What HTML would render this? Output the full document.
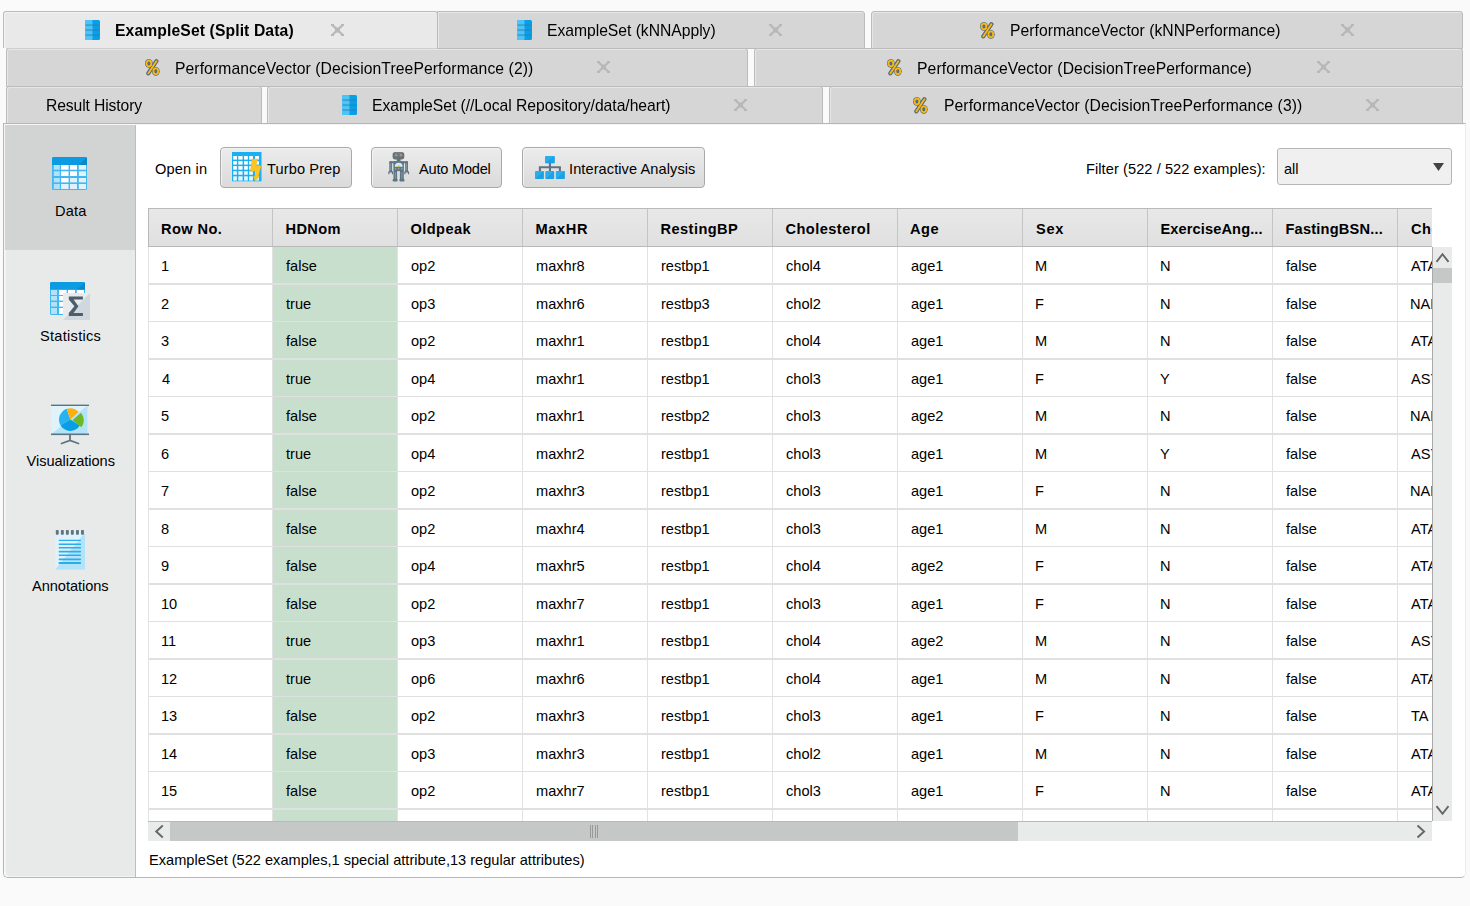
<!DOCTYPE html><html><head><meta charset="utf-8"><style>
*{margin:0;padding:0;box-sizing:border-box}
html,body{width:1470px;height:906px;overflow:hidden;background:#fafafa;font-family:"Liberation Sans",sans-serif;color:#000}
.a{position:absolute}
.tx{position:absolute;white-space:nowrap}
.tab{position:absolute;border:1px solid #bbbbbb;border-radius:3px 3px 0 0;background:#d6d6d6;box-shadow:inset 1px 1px 0 #e6e6e6}
.tab.sel{background:#e9e9e9;border-bottom:none;box-shadow:inset 1px 1px 0 #f3f3f3}
.btn{position:absolute;border:1px solid #a9a9a9;border-radius:4px;background:linear-gradient(#ececec,#dadada);box-shadow:inset 1px 1px 0 #f2f2f2}
</style></head><body>
<div class="tab sel" style="left:3px;top:11px;width:435px;height:37px;z-index:2"></div>
<div class="tab" style="left:437px;top:11px;width:428px;height:38px;z-index:1;border-top-left-radius:0"></div>
<div class="tab" style="left:871px;top:11px;width:592px;height:38px;z-index:1"></div>
<div class="tab" style="left:6px;top:48px;width:742px;height:39px;z-index:3"></div>
<div class="tab" style="left:754px;top:48px;width:709px;height:39px;z-index:3"></div>
<div class="tab" style="left:6px;top:86px;width:256px;height:38px;z-index:4"></div>
<div class="tab" style="left:267px;top:86px;width:556px;height:38px;z-index:4"></div>
<div class="tab" style="left:829px;top:86px;width:634px;height:38px;z-index:4"></div>
<div class="a" style="left:6px;top:48px;width:431px;height:1px;background:#cfcfcf;z-index:5"></div>
<svg class="a" style="left:85px;top:20px;z-index:20" width="15" height="20" viewBox="0 0 15 20"><rect x="0" y="0" width="15" height="20" rx="1.5" fill="#089fe6"/><rect x="0" y="0" width="7.5" height="20" rx="1" fill="#4cc4f8"/><rect x="0.5" y="4.6" width="14" height="0.9" fill="#2e7fae"/><rect x="0.5" y="9.6" width="14" height="0.9" fill="#2e7fae"/><rect x="0.5" y="14.6" width="14" height="0.9" fill="#2e7fae"/></svg>
<svg class="a" style="left:331px;top:24px;z-index:20" width="13" height="12" viewBox="0 0 13 12"><path d="M1.6 1.2L11.4 10.8M11.4 1.2L1.6 10.8" stroke="#b8b8b8" stroke-width="2.3"/><rect x="0" y="0" width="3" height="2" fill="#b8b8b8"/><rect x="10" y="0" width="3" height="2" fill="#b8b8b8"/><rect x="0" y="10" width="3" height="2" fill="#b8b8b8"/><rect x="10" y="10" width="3" height="2" fill="#b8b8b8"/><rect x="4" y="3.5" width="5" height="5" fill="#b8b8b8"/></svg>
<svg class="a" style="left:517px;top:20px;z-index:20" width="15" height="20" viewBox="0 0 15 20"><rect x="0" y="0" width="15" height="20" rx="1.5" fill="#089fe6"/><rect x="0" y="0" width="7.5" height="20" rx="1" fill="#4cc4f8"/><rect x="0.5" y="4.6" width="14" height="0.9" fill="#2e7fae"/><rect x="0.5" y="9.6" width="14" height="0.9" fill="#2e7fae"/><rect x="0.5" y="14.6" width="14" height="0.9" fill="#2e7fae"/></svg>
<svg class="a" style="left:769px;top:24px;z-index:20" width="13" height="12" viewBox="0 0 13 12"><path d="M1.6 1.2L11.4 10.8M11.4 1.2L1.6 10.8" stroke="#b8b8b8" stroke-width="2.3"/><rect x="0" y="0" width="3" height="2" fill="#b8b8b8"/><rect x="10" y="0" width="3" height="2" fill="#b8b8b8"/><rect x="0" y="10" width="3" height="2" fill="#b8b8b8"/><rect x="10" y="10" width="3" height="2" fill="#b8b8b8"/><rect x="4" y="3.5" width="5" height="5" fill="#b8b8b8"/></svg>
<svg class="a" style="left:980px;top:22px;z-index:20" width="16" height="17" viewBox="0 0 16 17"><ellipse cx="3.9" cy="4.4" rx="3.9" ry="4.4" fill="#536c7e"/><ellipse cx="10.8" cy="12.3" rx="3.9" ry="4.4" fill="#536c7e"/><line x1="11.4" y1="2.2" x2="3.3" y2="14.4" stroke="#536c7e" stroke-width="4.2" stroke-linecap="round"/><ellipse cx="3.9" cy="4.4" rx="2.4" ry="2.9" fill="none" stroke="#fbb814" stroke-width="1.8"/><ellipse cx="10.8" cy="12.3" rx="2.4" ry="2.9" fill="none" stroke="#fbb814" stroke-width="1.8"/><line x1="11.4" y1="2.2" x2="3.3" y2="14.4" stroke="#fbb814" stroke-width="1.8" stroke-linecap="round"/></svg>
<svg class="a" style="left:1341px;top:24px;z-index:20" width="13" height="12" viewBox="0 0 13 12"><path d="M1.6 1.2L11.4 10.8M11.4 1.2L1.6 10.8" stroke="#b8b8b8" stroke-width="2.3"/><rect x="0" y="0" width="3" height="2" fill="#b8b8b8"/><rect x="10" y="0" width="3" height="2" fill="#b8b8b8"/><rect x="0" y="10" width="3" height="2" fill="#b8b8b8"/><rect x="10" y="10" width="3" height="2" fill="#b8b8b8"/><rect x="4" y="3.5" width="5" height="5" fill="#b8b8b8"/></svg>
<svg class="a" style="left:145px;top:59px;z-index:20" width="16" height="17" viewBox="0 0 16 17"><ellipse cx="3.9" cy="4.4" rx="3.9" ry="4.4" fill="#536c7e"/><ellipse cx="10.8" cy="12.3" rx="3.9" ry="4.4" fill="#536c7e"/><line x1="11.4" y1="2.2" x2="3.3" y2="14.4" stroke="#536c7e" stroke-width="4.2" stroke-linecap="round"/><ellipse cx="3.9" cy="4.4" rx="2.4" ry="2.9" fill="none" stroke="#fbb814" stroke-width="1.8"/><ellipse cx="10.8" cy="12.3" rx="2.4" ry="2.9" fill="none" stroke="#fbb814" stroke-width="1.8"/><line x1="11.4" y1="2.2" x2="3.3" y2="14.4" stroke="#fbb814" stroke-width="1.8" stroke-linecap="round"/></svg>
<svg class="a" style="left:597px;top:61px;z-index:20" width="13" height="12" viewBox="0 0 13 12"><path d="M1.6 1.2L11.4 10.8M11.4 1.2L1.6 10.8" stroke="#b8b8b8" stroke-width="2.3"/><rect x="0" y="0" width="3" height="2" fill="#b8b8b8"/><rect x="10" y="0" width="3" height="2" fill="#b8b8b8"/><rect x="0" y="10" width="3" height="2" fill="#b8b8b8"/><rect x="10" y="10" width="3" height="2" fill="#b8b8b8"/><rect x="4" y="3.5" width="5" height="5" fill="#b8b8b8"/></svg>
<svg class="a" style="left:887px;top:59px;z-index:20" width="16" height="17" viewBox="0 0 16 17"><ellipse cx="3.9" cy="4.4" rx="3.9" ry="4.4" fill="#536c7e"/><ellipse cx="10.8" cy="12.3" rx="3.9" ry="4.4" fill="#536c7e"/><line x1="11.4" y1="2.2" x2="3.3" y2="14.4" stroke="#536c7e" stroke-width="4.2" stroke-linecap="round"/><ellipse cx="3.9" cy="4.4" rx="2.4" ry="2.9" fill="none" stroke="#fbb814" stroke-width="1.8"/><ellipse cx="10.8" cy="12.3" rx="2.4" ry="2.9" fill="none" stroke="#fbb814" stroke-width="1.8"/><line x1="11.4" y1="2.2" x2="3.3" y2="14.4" stroke="#fbb814" stroke-width="1.8" stroke-linecap="round"/></svg>
<svg class="a" style="left:1317px;top:61px;z-index:20" width="13" height="12" viewBox="0 0 13 12"><path d="M1.6 1.2L11.4 10.8M11.4 1.2L1.6 10.8" stroke="#b8b8b8" stroke-width="2.3"/><rect x="0" y="0" width="3" height="2" fill="#b8b8b8"/><rect x="10" y="0" width="3" height="2" fill="#b8b8b8"/><rect x="0" y="10" width="3" height="2" fill="#b8b8b8"/><rect x="10" y="10" width="3" height="2" fill="#b8b8b8"/><rect x="4" y="3.5" width="5" height="5" fill="#b8b8b8"/></svg>
<svg class="a" style="left:342px;top:95px;z-index:20" width="15" height="20" viewBox="0 0 15 20"><rect x="0" y="0" width="15" height="20" rx="1.5" fill="#089fe6"/><rect x="0" y="0" width="7.5" height="20" rx="1" fill="#4cc4f8"/><rect x="0.5" y="4.6" width="14" height="0.9" fill="#2e7fae"/><rect x="0.5" y="9.6" width="14" height="0.9" fill="#2e7fae"/><rect x="0.5" y="14.6" width="14" height="0.9" fill="#2e7fae"/></svg>
<svg class="a" style="left:734px;top:99px;z-index:20" width="13" height="12" viewBox="0 0 13 12"><path d="M1.6 1.2L11.4 10.8M11.4 1.2L1.6 10.8" stroke="#b8b8b8" stroke-width="2.3"/><rect x="0" y="0" width="3" height="2" fill="#b8b8b8"/><rect x="10" y="0" width="3" height="2" fill="#b8b8b8"/><rect x="0" y="10" width="3" height="2" fill="#b8b8b8"/><rect x="10" y="10" width="3" height="2" fill="#b8b8b8"/><rect x="4" y="3.5" width="5" height="5" fill="#b8b8b8"/></svg>
<svg class="a" style="left:913px;top:97px;z-index:20" width="16" height="17" viewBox="0 0 16 17"><ellipse cx="3.9" cy="4.4" rx="3.9" ry="4.4" fill="#536c7e"/><ellipse cx="10.8" cy="12.3" rx="3.9" ry="4.4" fill="#536c7e"/><line x1="11.4" y1="2.2" x2="3.3" y2="14.4" stroke="#536c7e" stroke-width="4.2" stroke-linecap="round"/><ellipse cx="3.9" cy="4.4" rx="2.4" ry="2.9" fill="none" stroke="#fbb814" stroke-width="1.8"/><ellipse cx="10.8" cy="12.3" rx="2.4" ry="2.9" fill="none" stroke="#fbb814" stroke-width="1.8"/><line x1="11.4" y1="2.2" x2="3.3" y2="14.4" stroke="#fbb814" stroke-width="1.8" stroke-linecap="round"/></svg>
<svg class="a" style="left:1366px;top:99px;z-index:20" width="13" height="12" viewBox="0 0 13 12"><path d="M1.6 1.2L11.4 10.8M11.4 1.2L1.6 10.8" stroke="#b8b8b8" stroke-width="2.3"/><rect x="0" y="0" width="3" height="2" fill="#b8b8b8"/><rect x="10" y="0" width="3" height="2" fill="#b8b8b8"/><rect x="0" y="10" width="3" height="2" fill="#b8b8b8"/><rect x="10" y="10" width="3" height="2" fill="#b8b8b8"/><rect x="4" y="3.5" width="5" height="5" fill="#b8b8b8"/></svg>
<div class="a" style="left:3px;top:123px;width:1463px;height:755px;border:1px solid #b6b6b6;border-right-color:#ececec;border-radius:0 0 5px 5px;background:#fff;z-index:10"></div>
<div class="a" style="left:4px;top:124px;width:1461px;height:1px;background:#f6f6f6;z-index:11"></div>
<div class="a" style="left:4px;top:124px;width:1px;height:748px;background:#f6f6f6;z-index:11"></div>
<div class="a" style="left:5px;top:125px;width:131px;height:752px;background:#e8eaea;border-right:1px solid #bdbdbd;border-bottom-left-radius:4px;box-shadow:inset 1px -1px 0 #f4f4f4;z-index:11"></div>
<div class="a" style="left:5px;top:125px;width:130px;height:125px;background:#d2d4d3;z-index:12"></div>
<div class="btn" style="left:220px;top:147px;width:132px;height:41px;z-index:12"></div>
<div class="btn" style="left:371px;top:147px;width:131px;height:41px;z-index:12"></div>
<div class="btn" style="left:522px;top:147px;width:183px;height:41px;z-index:12"></div>
<div class="a" style="left:1277px;top:148px;width:175px;height:37px;border:1px solid #b5b5b5;border-radius:3px;background:#f0f0f0;z-index:12"></div>
<svg class="a" style="left:1433px;top:163px;z-index:13" width="11" height="8"><path d="M0 0H11L5.5 8Z" fill="#444"/></svg>
<svg class="a" style="left:52px;top:157px;z-index:20" width="35" height="33" viewBox="0 0 35 33"><rect x="0" y="0" width="35" height="33" rx="1.5" fill="#41b8f1"/><path d="M1.5 0H33.5A1.5 1.5 0 0 1 35 1.5V8H0V1.5A1.5 1.5 0 0 1 1.5 0Z" fill="#0a9be3"/><path d="M27 8L35 0.5V8Z" fill="#0787cc"/><rect x="1.8" y="8" width="6" height="4.7" fill="#b3e2f8"/><rect x="9" y="8" width="7.6" height="4.7" fill="#ffffff"/><rect x="18" y="8" width="7" height="4.7" fill="#ffffff"/><rect x="26.8" y="8" width="7.2" height="4.7" fill="#e0f3fc"/><rect x="1.8" y="14.3" width="6" height="4.7" fill="#b3e2f8"/><rect x="9" y="14.3" width="7.6" height="4.7" fill="#ffffff"/><rect x="18" y="14.3" width="7" height="4.7" fill="#ffffff"/><rect x="26.8" y="14.3" width="7.2" height="4.7" fill="#e0f3fc"/><rect x="1.8" y="21" width="6" height="4.4" fill="#b3e2f8"/><rect x="9" y="21" width="7.6" height="4.4" fill="#ffffff"/><rect x="18" y="21" width="7" height="4.4" fill="#e0f3fc"/><rect x="26.8" y="21" width="7.2" height="4.4" fill="#e0f3fc"/><rect x="1.8" y="27" width="6" height="5" fill="#b3e2f8"/><rect x="9" y="27" width="7.6" height="5" fill="#e0f3fc"/><rect x="18" y="27" width="7" height="5" fill="#e0f3fc"/><rect x="26.8" y="27" width="7.2" height="5" fill="#e0f3fc"/></svg>
<svg class="a" style="left:50px;top:282px;z-index:20" width="41" height="39" viewBox="0 0 41 39"><rect x="0" y="0" width="35" height="33" rx="1.5" fill="#41b8f1"/><path d="M1.5 0H33.5A1.5 1.5 0 0 1 35 1.5V7.5H0V1.5A1.5 1.5 0 0 1 1.5 0Z" fill="#0a9be3"/><path d="M27 7.5L35 0.5V7.5Z" fill="#0787cc"/><rect x="1" y="8" width="6" height="5" fill="#b3e2f8"/><rect x="9" y="8" width="7.6" height="5" fill="#ffffff"/><rect x="18" y="8" width="7" height="5" fill="#ffffff"/><rect x="26.8" y="8" width="7.2" height="5" fill="#ffffff"/><rect x="1" y="14" width="6" height="4.6" fill="#b3e2f8"/><rect x="9" y="14" width="7.6" height="4.6" fill="#ffffff"/><rect x="18" y="14" width="7" height="4.6" fill="#ffffff"/><rect x="26.8" y="14" width="7.2" height="4.6" fill="#ffffff"/><rect x="1" y="20" width="6" height="4.6" fill="#b3e2f8"/><rect x="9" y="20" width="7.6" height="4.6" fill="#ffffff"/><rect x="18" y="20" width="7" height="4.6" fill="#ffffff"/><rect x="26.8" y="20" width="7.2" height="4.6" fill="#ffffff"/><rect x="1" y="26" width="6" height="6" fill="#b3e2f8"/><rect x="9" y="26" width="7.6" height="6" fill="#ffffff"/><rect x="18" y="26" width="7" height="6" fill="#ffffff"/><rect x="26.8" y="26" width="7.2" height="6" fill="#ffffff"/><rect x="13" y="11" width="27" height="27" fill="#e9eaeb"/><path d="M40 11V38H13Z" fill="#d0d8dd"/><path d="M18.8 14.5H32.9V17.5H23.6L28.4 24.2L23.6 30.9H32.9V33.9H18.8V31L24.4 24.2L18.8 17.4Z" fill="#4a5f6b"/></svg>
<svg class="a" style="left:46px;top:400px;z-index:20" width="48" height="46" viewBox="0 0 48 46"><rect x="5.5" y="5.5" width="36" height="28.5" fill="#dff3fc"/><path d="M41.5 5.5V34H5.5Z" fill="#b3e3f8"/><rect x="5" y="4.6" width="38" height="1.4" fill="#5b7482"/><rect x="5" y="33.5" width="38" height="1.6" fill="#5b7482"/><path d="M24 35V40.5M15.5 43.5L24 40.5L32.5 43.5" stroke="#5b7482" stroke-width="1.8" fill="none" stroke-linecap="round"/><path d="M24.3 19.6L14.51 25.25A11.3 11.3 0 0 1 20.81 8.85Z" fill="#29b2f0"/><path d="M24.3 19.6L33.88 25.59A11.3 11.3 0 0 1 14.51 25.25Z" fill="#079ee5"/><path d="M24.3 19.6L20.81 8.85A11.3 11.3 0 0 1 32.70 12.04Z" fill="#fdb00d"/><path d="M26.5 20.200000000000003L34.90 12.64A11.3 11.3 0 0 1 35.40 27.16Z" fill="#6cb825"/></svg>
<svg class="a" style="left:50px;top:526px;z-index:20" width="40" height="48" viewBox="0 0 40 48"><rect x="5" y="6.4" width="30" height="37.3" fill="#dff2fc"/><path d="M35 6.4V43.7H5Z" fill="#b3e3f8"/><rect x="5.8" y="4" width="2.9" height="4.7" rx="0.8" fill="#5e7580"/><rect x="10.9" y="4" width="2.9" height="4.7" rx="0.8" fill="#5e7580"/><rect x="15.9" y="4" width="2.9" height="4.7" rx="0.8" fill="#5e7580"/><rect x="20.9" y="4" width="2.9" height="4.7" rx="0.8" fill="#5e7580"/><rect x="26" y="4" width="2.9" height="4.7" rx="0.8" fill="#5e7580"/><rect x="31" y="4" width="2.9" height="4.7" rx="0.8" fill="#5e7580"/><rect x="8.7" y="13.7" width="22.3" height="1.3" rx="0.6" fill="#28aeed"/><rect x="8.7" y="17.6" width="22.3" height="1.4" rx="0.6" fill="#28aeed"/><rect x="8.7" y="21" width="22.3" height="1.6" rx="0.6" fill="#28aeed"/><rect x="8.7" y="24.8" width="22.3" height="1.6" rx="0.6" fill="#28aeed"/><rect x="8.7" y="28.5" width="22.3" height="1.6" rx="0.6" fill="#28aeed"/><rect x="8.7" y="32.4" width="22.3" height="1.8" rx="0.6" fill="#28aeed"/><rect x="8.7" y="36" width="22.3" height="2" rx="0.6" fill="#28aeed"/></svg>
<svg class="a" style="left:230px;top:150px;z-index:20" width="34" height="34" viewBox="0 0 34 34"><rect x="2" y="2" width="29.5" height="29.3" fill="#1aaef2"/><rect x="3.2" y="6" width="3.7" height="3.6" fill="#ffffff"/><rect x="8.3" y="6" width="4.3" height="3.6" fill="#ffffff"/><rect x="14.1" y="6" width="3.7" height="3.6" fill="#ffffff"/><rect x="19.1" y="6" width="3.8" height="3.6" fill="#ffffff"/><rect x="25" y="6" width="3.9" height="3.6" fill="#ffffff"/><rect x="3.2" y="11.1" width="3.7" height="3.5" fill="#ffffff"/><rect x="8.3" y="11.1" width="4.3" height="3.5" fill="#ffffff"/><rect x="14.1" y="11.1" width="3.7" height="3.5" fill="#ffffff"/><rect x="19.1" y="11.1" width="3.8" height="3.5" fill="#ffffff"/><rect x="25" y="11.1" width="3.9" height="3.5" fill="#ffffff"/><rect x="3.2" y="16.1" width="3.7" height="3.6" fill="#ffffff"/><rect x="8.3" y="16.1" width="4.3" height="3.6" fill="#ffffff"/><rect x="14.1" y="16.1" width="3.7" height="3.6" fill="#ffffff"/><rect x="19.1" y="16.1" width="3.8" height="3.6" fill="#ffffff"/><rect x="25" y="16.1" width="3.9" height="3.6" fill="#ffffff"/><rect x="3.2" y="21.2" width="3.7" height="3.6" fill="#e3f5fd"/><rect x="8.3" y="21.2" width="4.3" height="3.6" fill="#e3f5fd"/><rect x="14.1" y="21.2" width="3.7" height="3.6" fill="#e3f5fd"/><rect x="19.1" y="21.2" width="3.8" height="3.6" fill="#e3f5fd"/><rect x="25" y="21.2" width="3.9" height="3.6" fill="#e3f5fd"/><rect x="3.2" y="26.3" width="3.7" height="4.3" fill="#e3f5fd"/><rect x="8.3" y="26.3" width="4.3" height="4.3" fill="#e3f5fd"/><rect x="14.1" y="26.3" width="3.7" height="4.3" fill="#e3f5fd"/><rect x="19.1" y="26.3" width="3.8" height="4.3" fill="#e3f5fd"/><rect x="25" y="26.3" width="3.9" height="4.3" fill="#e3f5fd"/><path d="M22.1 9H28L25.9 15.2L31.1 15.8L28.3 26.3H29.6L25.1 31.1L23.3 26.3H24.8L26 21.2H20.3Z" fill="#fcc520" stroke="#f0b010" stroke-width="0.4"/></svg>
<svg class="a" style="left:384px;top:150px;z-index:20" width="30" height="34" viewBox="0 0 30 34"><rect x="8.6" y="2.1" width="11.7" height="7.3" rx="2.6" fill="#5d7582"/><rect x="10.5" y="2.4" width="8" height="1" rx="0.5" fill="#8a9da8" opacity="0.6"/><circle cx="12.2" cy="5.2" r="1.25" fill="#e5854c"/><circle cx="16.8" cy="5.2" r="1.25" fill="#e5854c"/><rect x="12.7" y="9" width="3.8" height="2.5" fill="#5d7582"/><rect x="5.3" y="11.3" width="18.7" height="2" rx="0.9" fill="#5d7582"/><rect x="9.4" y="11.3" width="10.5" height="9.8" fill="#5d7582"/><rect x="5.3" y="11.5" width="2.8" height="10.2" fill="#5d7582"/><rect x="21.2" y="11.5" width="2.8" height="10.2" fill="#5d7582"/><rect x="6.3" y="13.5" width="0.9" height="7" fill="#8a9da8"/><rect x="22.2" y="13.5" width="0.9" height="7" fill="#8a9da8"/><path d="M4.3 24.2V22.2Q4.3 21 5.5 21H7.9Q9.1 21 9.1 22.2V24.2H7.9V22.6H5.5V24.2Z" fill="#5d7582"/><path d="M20.3 24.2V22.2Q20.3 21 21.5 21H23.9Q25.1 21 25.1 22.2V24.2H23.9V22.6H21.5V24.2Z" fill="#5d7582"/><path d="M10.7 16.8A4 4 0 0 1 18.7 16.8Z" fill="#cdeefa"/><circle cx="14.7" cy="16.2" r="0.9" fill="#f0b020"/><rect x="10.8" y="17.8" width="1.6" height="1.8" fill="#8a9da8"/><rect x="13.9" y="17.8" width="1.6" height="1.8" fill="#8a9da8"/><rect x="17" y="17.8" width="1.6" height="1.8" fill="#8a9da8"/><rect x="9.5" y="21" width="3.6" height="9" fill="#5d7582"/><rect x="15.9" y="21" width="3.9" height="9" fill="#5d7582"/><rect x="10.9" y="22" width="0.9" height="6.5" fill="#8a9da8"/><rect x="17.4" y="22" width="0.9" height="6.5" fill="#8a9da8"/><rect x="8.6" y="29" width="5" height="2.6" rx="1" fill="#5d7582"/><rect x="15.4" y="29" width="5.1" height="2.6" rx="1" fill="#5d7582"/></svg>
<svg class="a" style="left:532px;top:150px;z-index:20" width="36" height="34" viewBox="0 0 36 34"><rect x="13" y="6" width="9.7" height="7.3" rx="1" fill="#28aeed"/><path d="M17.95 13V21M7.9 21V17.3H27.9V21" stroke="#5d7582" stroke-width="2.1" fill="none"/><rect x="3" y="21" width="8.8" height="7.9" rx="1" fill="#28aeed"/><rect x="13.3" y="21" width="8.8" height="7.9" rx="1" fill="#28aeed"/><rect x="23.8" y="21" width="9" height="7.9" rx="1" fill="#28aeed"/><path d="M22.7 6V13.3H13Z" fill="#1598de" opacity="0.6"/><path d="M11.8 21V28.9H3Z" fill="#1598de" opacity="0.6"/><path d="M22.1 21V28.9H13.3Z" fill="#1598de" opacity="0.6"/><path d="M32.8 21V28.9H23.8Z" fill="#1598de" opacity="0.6"/></svg>
<div class="a" style="left:148px;top:208px;width:1284px;height:39px;border:1px solid #b9b9b9;border-right:none;background:linear-gradient(#e8e8e8,#e0e0e0);z-index:12"></div>
<div class="a" style="left:272px;top:209px;width:1px;height:37px;background:#c4c4c4;z-index:13"></div>
<div class="a" style="left:397px;top:209px;width:1px;height:37px;background:#c4c4c4;z-index:13"></div>
<div class="a" style="left:522px;top:209px;width:1px;height:37px;background:#c4c4c4;z-index:13"></div>
<div class="a" style="left:647px;top:209px;width:1px;height:37px;background:#c4c4c4;z-index:13"></div>
<div class="a" style="left:772px;top:209px;width:1px;height:37px;background:#c4c4c4;z-index:13"></div>
<div class="a" style="left:897px;top:209px;width:1px;height:37px;background:#c4c4c4;z-index:13"></div>
<div class="a" style="left:1022px;top:209px;width:1px;height:37px;background:#c4c4c4;z-index:13"></div>
<div class="a" style="left:1147px;top:209px;width:1px;height:37px;background:#c4c4c4;z-index:13"></div>
<div class="a" style="left:1272px;top:209px;width:1px;height:37px;background:#c4c4c4;z-index:13"></div>
<div class="a" style="left:1397px;top:209px;width:1px;height:37px;background:#c4c4c4;z-index:13"></div>
<div class="a" style="left:273px;top:247px;width:124px;height:574px;background:#c8dfcd;z-index:12"></div>
<div class="a" style="left:148px;top:247px;width:1px;height:574px;background:#e2e2e2;z-index:13"></div>
<div class="a" style="left:272px;top:247px;width:1px;height:574px;background:#e2e2e2;z-index:13"></div>
<div class="a" style="left:397px;top:247px;width:1px;height:574px;background:#e2e2e2;z-index:13"></div>
<div class="a" style="left:522px;top:247px;width:1px;height:574px;background:#e2e2e2;z-index:13"></div>
<div class="a" style="left:647px;top:247px;width:1px;height:574px;background:#e2e2e2;z-index:13"></div>
<div class="a" style="left:772px;top:247px;width:1px;height:574px;background:#e2e2e2;z-index:13"></div>
<div class="a" style="left:897px;top:247px;width:1px;height:574px;background:#e2e2e2;z-index:13"></div>
<div class="a" style="left:1022px;top:247px;width:1px;height:574px;background:#e2e2e2;z-index:13"></div>
<div class="a" style="left:1147px;top:247px;width:1px;height:574px;background:#e2e2e2;z-index:13"></div>
<div class="a" style="left:1272px;top:247px;width:1px;height:574px;background:#e2e2e2;z-index:13"></div>
<div class="a" style="left:1397px;top:247px;width:1px;height:574px;background:#e2e2e2;z-index:13"></div>
<div class="a" style="left:149px;top:283.0px;width:1283px;height:1.5px;background:#e0e0e0;z-index:13"></div>
<div class="a" style="left:149px;top:320.5px;width:1283px;height:1.5px;background:#e0e0e0;z-index:13"></div>
<div class="a" style="left:149px;top:358.0px;width:1283px;height:1.5px;background:#e0e0e0;z-index:13"></div>
<div class="a" style="left:149px;top:395.5px;width:1283px;height:1.5px;background:#e0e0e0;z-index:13"></div>
<div class="a" style="left:149px;top:433.0px;width:1283px;height:1.5px;background:#e0e0e0;z-index:13"></div>
<div class="a" style="left:149px;top:470.5px;width:1283px;height:1.5px;background:#e0e0e0;z-index:13"></div>
<div class="a" style="left:149px;top:508.0px;width:1283px;height:1.5px;background:#e0e0e0;z-index:13"></div>
<div class="a" style="left:149px;top:545.5px;width:1283px;height:1.5px;background:#e0e0e0;z-index:13"></div>
<div class="a" style="left:149px;top:583.0px;width:1283px;height:1.5px;background:#e0e0e0;z-index:13"></div>
<div class="a" style="left:149px;top:620.5px;width:1283px;height:1.5px;background:#e0e0e0;z-index:13"></div>
<div class="a" style="left:149px;top:658.0px;width:1283px;height:1.5px;background:#e0e0e0;z-index:13"></div>
<div class="a" style="left:149px;top:695.5px;width:1283px;height:1.5px;background:#e0e0e0;z-index:13"></div>
<div class="a" style="left:149px;top:733.0px;width:1283px;height:1.5px;background:#e0e0e0;z-index:13"></div>
<div class="a" style="left:149px;top:770.5px;width:1283px;height:1.5px;background:#e0e0e0;z-index:13"></div>
<div class="a" style="left:149px;top:808.0px;width:1283px;height:1.5px;background:#e0e0e0;z-index:13"></div>
<div class="a" style="left:148px;top:821px;width:1284px;height:1px;background:#b9b9b9;z-index:30"></div>
<div class="a" style="left:1432px;top:208px;width:33px;height:613px;background:#fff;z-index:29"></div>
<div class="a" style="left:1432px;top:247px;width:1px;height:574px;background:#a9a9a9;z-index:30"></div>
<div class="a" style="left:1433px;top:247px;width:19px;height:574px;background:#e9eaea;z-index:30"></div>
<div class="a" style="left:1433px;top:268px;width:19px;height:15px;background:#c6c7c7;z-index:31"></div>
<svg class="a" style="left:1433px;top:247px;z-index:31" width="19" height="21"><path d="M3.5 14.8 L9.5 7.2 L15.5 14.8" stroke="#666" stroke-width="1.9" fill="none"/></svg>
<svg class="a" style="left:1433px;top:800px;z-index:31" width="19" height="21"><path d="M3.5 6.2 L9.5 13.8 L15.5 6.2" stroke="#666" stroke-width="1.9" fill="none"/></svg>
<div class="a" style="left:148px;top:822px;width:1284px;height:19px;background:#e9eaea;z-index:30"></div>
<div class="a" style="left:170px;top:822px;width:848px;height:19px;background:#c6c7c7;z-index:31"></div>
<svg class="a" style="left:148px;top:822px;z-index:31" width="21" height="19"><path d="M14.8 3.5 L8.2 9.5 L14.8 15.5" stroke="#666" stroke-width="1.9" fill="none"/></svg>
<svg class="a" style="left:1411px;top:822px;z-index:31" width="21" height="19"><path d="M6.5 3.5 L13.1 9.5 L6.5 15.5" stroke="#666" stroke-width="1.9" fill="none"/></svg>
<svg class="a" style="left:589px;top:825px;z-index:32" width="10" height="13"><path d="M1.5 0V13M3.5 0V13M6.5 0V13M8.5 0V13" stroke="#999" stroke-width="1"/></svg>
<div class="tx" style="left:115px;top:23px;font-size:15.7px;line-height:15.7px;font-weight:bold;letter-spacing:0.114px;z-index:20;will-change:transform;">ExampleSet (Split Data)</div>
<div class="tx" style="left:547px;top:23px;font-size:15.7px;line-height:15.7px;letter-spacing:-0.025px;z-index:20;will-change:transform;">ExampleSet (kNNApply)</div>
<div class="tx" style="left:1010px;top:23px;font-size:15.7px;line-height:15.7px;letter-spacing:0.030px;z-index:20;will-change:transform;">PerformanceVector (kNNPerformance)</div>
<div class="tx" style="left:175px;top:61px;font-size:15.7px;line-height:15.7px;letter-spacing:0.087px;z-index:20;will-change:transform;">PerformanceVector (DecisionTreePerformance (2))</div>
<div class="tx" style="left:917px;top:61px;font-size:15.7px;line-height:15.7px;letter-spacing:0.095px;z-index:20;will-change:transform;">PerformanceVector (DecisionTreePerformance)</div>
<div class="tx" style="left:46px;top:98px;font-size:15.7px;line-height:15.7px;letter-spacing:-0.115px;z-index:20;will-change:transform;">Result History</div>
<div class="tx" style="left:372px;top:98px;font-size:15.7px;line-height:15.7px;letter-spacing:-0.037px;z-index:20;will-change:transform;">ExampleSet (//Local Repository/data/heart)</div>
<div class="tx" style="left:944px;top:98px;font-size:15.7px;line-height:15.7px;letter-spacing:0.087px;z-index:20;will-change:transform;">PerformanceVector (DecisionTreePerformance (3))</div>
<div class="tx" style="left:155px;top:162px;font-size:14.6px;line-height:14.6px;letter-spacing:0.167px;z-index:20;">Open in</div>
<div class="tx" style="left:267px;top:162px;font-size:14.6px;line-height:14.6px;letter-spacing:0.111px;z-index:20;">Turbo Prep</div>
<div class="tx" style="left:419px;top:162px;font-size:14.6px;line-height:14.6px;letter-spacing:-0.222px;z-index:20;">Auto Model</div>
<div class="tx" style="left:569px;top:162px;font-size:14.6px;line-height:14.6px;letter-spacing:0.079px;z-index:20;">Interactive Analysis</div>
<div class="tx" style="left:1086px;top:162px;font-size:14.6px;line-height:14.6px;letter-spacing:0.074px;z-index:20;">Filter (522 / 522 examples):</div>
<div class="tx" style="left:1284px;top:162px;font-size:14.6px;line-height:14.6px;z-index:20;">all</div>
<div class="tx" style="left:55px;top:204px;font-size:14.6px;line-height:14.6px;letter-spacing:0.167px;z-index:20;">Data</div>
<div class="tx" style="left:40px;top:329px;font-size:14.6px;line-height:14.6px;letter-spacing:0.278px;z-index:20;">Statistics</div>
<div class="tx" style="left:26.5px;top:454px;font-size:14.6px;line-height:14.6px;letter-spacing:-0.038px;z-index:20;">Visualizations</div>
<div class="tx" style="left:32px;top:579px;font-size:14.6px;line-height:14.6px;letter-spacing:-0.050px;z-index:20;">Annotations</div>
<div class="tx" style="left:149px;top:853px;font-size:14.6px;line-height:14.6px;letter-spacing:0.000px;z-index:20;">ExampleSet (522 examples,1 special attribute,13 regular attributes)</div>
<div class="tx" style="left:161px;top:222px;font-size:14.6px;line-height:14.6px;font-weight:bold;letter-spacing:0.417px;z-index:20;">Row No.</div>
<div class="tx" style="left:285.5px;top:222px;font-size:14.6px;line-height:14.6px;font-weight:bold;letter-spacing:0.375px;z-index:20;">HDNom</div>
<div class="tx" style="left:410.5px;top:222px;font-size:14.6px;line-height:14.6px;font-weight:bold;letter-spacing:0.417px;z-index:20;">Oldpeak</div>
<div class="tx" style="left:535.5px;top:222px;font-size:14.6px;line-height:14.6px;font-weight:bold;letter-spacing:0.625px;z-index:20;">MaxHR</div>
<div class="tx" style="left:660.5px;top:222px;font-size:14.6px;line-height:14.6px;font-weight:bold;letter-spacing:0.438px;z-index:20;">RestingBP</div>
<div class="tx" style="left:785.5px;top:222px;font-size:14.6px;line-height:14.6px;font-weight:bold;letter-spacing:0.450px;z-index:20;">Cholesterol</div>
<div class="tx" style="left:910px;top:222px;font-size:14.6px;line-height:14.6px;font-weight:bold;letter-spacing:0.500px;z-index:20;">Age</div>
<div class="tx" style="left:1036px;top:222px;font-size:14.6px;line-height:14.6px;font-weight:bold;letter-spacing:0.750px;z-index:20;">Sex</div>
<div class="tx" style="left:1160.5px;top:222px;font-size:14.6px;line-height:14.6px;font-weight:bold;letter-spacing:0.115px;z-index:20;">ExerciseAng...</div>
<div class="tx" style="left:1285.5px;top:222px;font-size:14.6px;line-height:14.6px;font-weight:bold;letter-spacing:0.208px;z-index:20;">FastingBSN...</div>
<div class="tx" style="left:1411px;top:222px;font-size:14.6px;line-height:14.6px;font-weight:bold;z-index:20;letter-spacing:0.5px;">Ches</div>
<div class="tx" style="left:161px;top:259px;font-size:14.6px;line-height:14.6px;z-index:20;">1</div>
<div class="tx" style="left:286px;top:259px;font-size:14.6px;line-height:14.6px;z-index:20;">false</div>
<div class="tx" style="left:411px;top:259px;font-size:14.6px;line-height:14.6px;z-index:20;">op2</div>
<div class="tx" style="left:536px;top:259px;font-size:14.6px;line-height:14.6px;z-index:20;">maxhr8</div>
<div class="tx" style="left:661px;top:259px;font-size:14.6px;line-height:14.6px;z-index:20;">restbp1</div>
<div class="tx" style="left:786px;top:259px;font-size:14.6px;line-height:14.6px;z-index:20;">chol4</div>
<div class="tx" style="left:911px;top:259px;font-size:14.6px;line-height:14.6px;z-index:20;">age1</div>
<div class="tx" style="left:1035px;top:259px;font-size:14.6px;line-height:14.6px;z-index:20;">M</div>
<div class="tx" style="left:1160px;top:259px;font-size:14.6px;line-height:14.6px;z-index:20;">N</div>
<div class="tx" style="left:1286px;top:259px;font-size:14.6px;line-height:14.6px;z-index:20;">false</div>
<div class="tx" style="left:1411px;top:259px;font-size:14.6px;line-height:14.6px;z-index:20;">ATA</div>
<div class="tx" style="left:161px;top:297px;font-size:14.6px;line-height:14.6px;z-index:20;">2</div>
<div class="tx" style="left:286px;top:297px;font-size:14.6px;line-height:14.6px;z-index:20;">true</div>
<div class="tx" style="left:411px;top:297px;font-size:14.6px;line-height:14.6px;z-index:20;">op3</div>
<div class="tx" style="left:536px;top:297px;font-size:14.6px;line-height:14.6px;z-index:20;">maxhr6</div>
<div class="tx" style="left:661px;top:297px;font-size:14.6px;line-height:14.6px;z-index:20;">restbp3</div>
<div class="tx" style="left:786px;top:297px;font-size:14.6px;line-height:14.6px;z-index:20;">chol2</div>
<div class="tx" style="left:911px;top:297px;font-size:14.6px;line-height:14.6px;z-index:20;">age1</div>
<div class="tx" style="left:1035px;top:297px;font-size:14.6px;line-height:14.6px;z-index:20;">F</div>
<div class="tx" style="left:1160px;top:297px;font-size:14.6px;line-height:14.6px;z-index:20;">N</div>
<div class="tx" style="left:1286px;top:297px;font-size:14.6px;line-height:14.6px;z-index:20;">false</div>
<div class="tx" style="left:1410px;top:297px;font-size:14.6px;line-height:14.6px;z-index:20;">NAP</div>
<div class="tx" style="left:161px;top:334px;font-size:14.6px;line-height:14.6px;z-index:20;">3</div>
<div class="tx" style="left:286px;top:334px;font-size:14.6px;line-height:14.6px;z-index:20;">false</div>
<div class="tx" style="left:411px;top:334px;font-size:14.6px;line-height:14.6px;z-index:20;">op2</div>
<div class="tx" style="left:536px;top:334px;font-size:14.6px;line-height:14.6px;z-index:20;">maxhr1</div>
<div class="tx" style="left:661px;top:334px;font-size:14.6px;line-height:14.6px;z-index:20;">restbp1</div>
<div class="tx" style="left:786px;top:334px;font-size:14.6px;line-height:14.6px;z-index:20;">chol4</div>
<div class="tx" style="left:911px;top:334px;font-size:14.6px;line-height:14.6px;z-index:20;">age1</div>
<div class="tx" style="left:1035px;top:334px;font-size:14.6px;line-height:14.6px;z-index:20;">M</div>
<div class="tx" style="left:1160px;top:334px;font-size:14.6px;line-height:14.6px;z-index:20;">N</div>
<div class="tx" style="left:1286px;top:334px;font-size:14.6px;line-height:14.6px;z-index:20;">false</div>
<div class="tx" style="left:1411px;top:334px;font-size:14.6px;line-height:14.6px;z-index:20;">ATA</div>
<div class="tx" style="left:162px;top:372px;font-size:14.6px;line-height:14.6px;z-index:20;">4</div>
<div class="tx" style="left:286px;top:372px;font-size:14.6px;line-height:14.6px;z-index:20;">true</div>
<div class="tx" style="left:411px;top:372px;font-size:14.6px;line-height:14.6px;z-index:20;">op4</div>
<div class="tx" style="left:536px;top:372px;font-size:14.6px;line-height:14.6px;z-index:20;">maxhr1</div>
<div class="tx" style="left:661px;top:372px;font-size:14.6px;line-height:14.6px;z-index:20;">restbp1</div>
<div class="tx" style="left:786px;top:372px;font-size:14.6px;line-height:14.6px;z-index:20;">chol3</div>
<div class="tx" style="left:911px;top:372px;font-size:14.6px;line-height:14.6px;z-index:20;">age1</div>
<div class="tx" style="left:1035px;top:372px;font-size:14.6px;line-height:14.6px;z-index:20;">F</div>
<div class="tx" style="left:1160px;top:372px;font-size:14.6px;line-height:14.6px;z-index:20;">Y</div>
<div class="tx" style="left:1286px;top:372px;font-size:14.6px;line-height:14.6px;z-index:20;">false</div>
<div class="tx" style="left:1411px;top:372px;font-size:14.6px;line-height:14.6px;z-index:20;">ASY</div>
<div class="tx" style="left:161px;top:409px;font-size:14.6px;line-height:14.6px;z-index:20;">5</div>
<div class="tx" style="left:286px;top:409px;font-size:14.6px;line-height:14.6px;z-index:20;">false</div>
<div class="tx" style="left:411px;top:409px;font-size:14.6px;line-height:14.6px;z-index:20;">op2</div>
<div class="tx" style="left:536px;top:409px;font-size:14.6px;line-height:14.6px;z-index:20;">maxhr1</div>
<div class="tx" style="left:661px;top:409px;font-size:14.6px;line-height:14.6px;z-index:20;">restbp2</div>
<div class="tx" style="left:786px;top:409px;font-size:14.6px;line-height:14.6px;z-index:20;">chol3</div>
<div class="tx" style="left:911px;top:409px;font-size:14.6px;line-height:14.6px;z-index:20;">age2</div>
<div class="tx" style="left:1035px;top:409px;font-size:14.6px;line-height:14.6px;z-index:20;">M</div>
<div class="tx" style="left:1160px;top:409px;font-size:14.6px;line-height:14.6px;z-index:20;">N</div>
<div class="tx" style="left:1286px;top:409px;font-size:14.6px;line-height:14.6px;z-index:20;">false</div>
<div class="tx" style="left:1410px;top:409px;font-size:14.6px;line-height:14.6px;z-index:20;">NAP</div>
<div class="tx" style="left:161px;top:447px;font-size:14.6px;line-height:14.6px;z-index:20;">6</div>
<div class="tx" style="left:286px;top:447px;font-size:14.6px;line-height:14.6px;z-index:20;">true</div>
<div class="tx" style="left:411px;top:447px;font-size:14.6px;line-height:14.6px;z-index:20;">op4</div>
<div class="tx" style="left:536px;top:447px;font-size:14.6px;line-height:14.6px;z-index:20;">maxhr2</div>
<div class="tx" style="left:661px;top:447px;font-size:14.6px;line-height:14.6px;z-index:20;">restbp1</div>
<div class="tx" style="left:786px;top:447px;font-size:14.6px;line-height:14.6px;z-index:20;">chol3</div>
<div class="tx" style="left:911px;top:447px;font-size:14.6px;line-height:14.6px;z-index:20;">age1</div>
<div class="tx" style="left:1035px;top:447px;font-size:14.6px;line-height:14.6px;z-index:20;">M</div>
<div class="tx" style="left:1160px;top:447px;font-size:14.6px;line-height:14.6px;z-index:20;">Y</div>
<div class="tx" style="left:1286px;top:447px;font-size:14.6px;line-height:14.6px;z-index:20;">false</div>
<div class="tx" style="left:1411px;top:447px;font-size:14.6px;line-height:14.6px;z-index:20;">ASY</div>
<div class="tx" style="left:161px;top:484px;font-size:14.6px;line-height:14.6px;z-index:20;">7</div>
<div class="tx" style="left:286px;top:484px;font-size:14.6px;line-height:14.6px;z-index:20;">false</div>
<div class="tx" style="left:411px;top:484px;font-size:14.6px;line-height:14.6px;z-index:20;">op2</div>
<div class="tx" style="left:536px;top:484px;font-size:14.6px;line-height:14.6px;z-index:20;">maxhr3</div>
<div class="tx" style="left:661px;top:484px;font-size:14.6px;line-height:14.6px;z-index:20;">restbp1</div>
<div class="tx" style="left:786px;top:484px;font-size:14.6px;line-height:14.6px;z-index:20;">chol3</div>
<div class="tx" style="left:911px;top:484px;font-size:14.6px;line-height:14.6px;z-index:20;">age1</div>
<div class="tx" style="left:1035px;top:484px;font-size:14.6px;line-height:14.6px;z-index:20;">F</div>
<div class="tx" style="left:1160px;top:484px;font-size:14.6px;line-height:14.6px;z-index:20;">N</div>
<div class="tx" style="left:1286px;top:484px;font-size:14.6px;line-height:14.6px;z-index:20;">false</div>
<div class="tx" style="left:1410px;top:484px;font-size:14.6px;line-height:14.6px;z-index:20;">NAP</div>
<div class="tx" style="left:161px;top:522px;font-size:14.6px;line-height:14.6px;z-index:20;">8</div>
<div class="tx" style="left:286px;top:522px;font-size:14.6px;line-height:14.6px;z-index:20;">false</div>
<div class="tx" style="left:411px;top:522px;font-size:14.6px;line-height:14.6px;z-index:20;">op2</div>
<div class="tx" style="left:536px;top:522px;font-size:14.6px;line-height:14.6px;z-index:20;">maxhr4</div>
<div class="tx" style="left:661px;top:522px;font-size:14.6px;line-height:14.6px;z-index:20;">restbp1</div>
<div class="tx" style="left:786px;top:522px;font-size:14.6px;line-height:14.6px;z-index:20;">chol3</div>
<div class="tx" style="left:911px;top:522px;font-size:14.6px;line-height:14.6px;z-index:20;">age1</div>
<div class="tx" style="left:1035px;top:522px;font-size:14.6px;line-height:14.6px;z-index:20;">M</div>
<div class="tx" style="left:1160px;top:522px;font-size:14.6px;line-height:14.6px;z-index:20;">N</div>
<div class="tx" style="left:1286px;top:522px;font-size:14.6px;line-height:14.6px;z-index:20;">false</div>
<div class="tx" style="left:1411px;top:522px;font-size:14.6px;line-height:14.6px;z-index:20;">ATA</div>
<div class="tx" style="left:161px;top:559px;font-size:14.6px;line-height:14.6px;z-index:20;">9</div>
<div class="tx" style="left:286px;top:559px;font-size:14.6px;line-height:14.6px;z-index:20;">false</div>
<div class="tx" style="left:411px;top:559px;font-size:14.6px;line-height:14.6px;z-index:20;">op4</div>
<div class="tx" style="left:536px;top:559px;font-size:14.6px;line-height:14.6px;z-index:20;">maxhr5</div>
<div class="tx" style="left:661px;top:559px;font-size:14.6px;line-height:14.6px;z-index:20;">restbp1</div>
<div class="tx" style="left:786px;top:559px;font-size:14.6px;line-height:14.6px;z-index:20;">chol4</div>
<div class="tx" style="left:911px;top:559px;font-size:14.6px;line-height:14.6px;z-index:20;">age2</div>
<div class="tx" style="left:1035px;top:559px;font-size:14.6px;line-height:14.6px;z-index:20;">F</div>
<div class="tx" style="left:1160px;top:559px;font-size:14.6px;line-height:14.6px;z-index:20;">N</div>
<div class="tx" style="left:1286px;top:559px;font-size:14.6px;line-height:14.6px;z-index:20;">false</div>
<div class="tx" style="left:1411px;top:559px;font-size:14.6px;line-height:14.6px;z-index:20;">ATA</div>
<div class="tx" style="left:161px;top:597px;font-size:14.6px;line-height:14.6px;z-index:20;">10</div>
<div class="tx" style="left:286px;top:597px;font-size:14.6px;line-height:14.6px;z-index:20;">false</div>
<div class="tx" style="left:411px;top:597px;font-size:14.6px;line-height:14.6px;z-index:20;">op2</div>
<div class="tx" style="left:536px;top:597px;font-size:14.6px;line-height:14.6px;z-index:20;">maxhr7</div>
<div class="tx" style="left:661px;top:597px;font-size:14.6px;line-height:14.6px;z-index:20;">restbp1</div>
<div class="tx" style="left:786px;top:597px;font-size:14.6px;line-height:14.6px;z-index:20;">chol3</div>
<div class="tx" style="left:911px;top:597px;font-size:14.6px;line-height:14.6px;z-index:20;">age1</div>
<div class="tx" style="left:1035px;top:597px;font-size:14.6px;line-height:14.6px;z-index:20;">F</div>
<div class="tx" style="left:1160px;top:597px;font-size:14.6px;line-height:14.6px;z-index:20;">N</div>
<div class="tx" style="left:1286px;top:597px;font-size:14.6px;line-height:14.6px;z-index:20;">false</div>
<div class="tx" style="left:1411px;top:597px;font-size:14.6px;line-height:14.6px;z-index:20;">ATA</div>
<div class="tx" style="left:161px;top:634px;font-size:14.6px;line-height:14.6px;z-index:20;">11</div>
<div class="tx" style="left:286px;top:634px;font-size:14.6px;line-height:14.6px;z-index:20;">true</div>
<div class="tx" style="left:411px;top:634px;font-size:14.6px;line-height:14.6px;z-index:20;">op3</div>
<div class="tx" style="left:536px;top:634px;font-size:14.6px;line-height:14.6px;z-index:20;">maxhr1</div>
<div class="tx" style="left:661px;top:634px;font-size:14.6px;line-height:14.6px;z-index:20;">restbp1</div>
<div class="tx" style="left:786px;top:634px;font-size:14.6px;line-height:14.6px;z-index:20;">chol4</div>
<div class="tx" style="left:911px;top:634px;font-size:14.6px;line-height:14.6px;z-index:20;">age2</div>
<div class="tx" style="left:1035px;top:634px;font-size:14.6px;line-height:14.6px;z-index:20;">M</div>
<div class="tx" style="left:1160px;top:634px;font-size:14.6px;line-height:14.6px;z-index:20;">N</div>
<div class="tx" style="left:1286px;top:634px;font-size:14.6px;line-height:14.6px;z-index:20;">false</div>
<div class="tx" style="left:1411px;top:634px;font-size:14.6px;line-height:14.6px;z-index:20;">ASY</div>
<div class="tx" style="left:161px;top:672px;font-size:14.6px;line-height:14.6px;z-index:20;">12</div>
<div class="tx" style="left:286px;top:672px;font-size:14.6px;line-height:14.6px;z-index:20;">true</div>
<div class="tx" style="left:411px;top:672px;font-size:14.6px;line-height:14.6px;z-index:20;">op6</div>
<div class="tx" style="left:536px;top:672px;font-size:14.6px;line-height:14.6px;z-index:20;">maxhr6</div>
<div class="tx" style="left:661px;top:672px;font-size:14.6px;line-height:14.6px;z-index:20;">restbp1</div>
<div class="tx" style="left:786px;top:672px;font-size:14.6px;line-height:14.6px;z-index:20;">chol4</div>
<div class="tx" style="left:911px;top:672px;font-size:14.6px;line-height:14.6px;z-index:20;">age1</div>
<div class="tx" style="left:1035px;top:672px;font-size:14.6px;line-height:14.6px;z-index:20;">M</div>
<div class="tx" style="left:1160px;top:672px;font-size:14.6px;line-height:14.6px;z-index:20;">N</div>
<div class="tx" style="left:1286px;top:672px;font-size:14.6px;line-height:14.6px;z-index:20;">false</div>
<div class="tx" style="left:1411px;top:672px;font-size:14.6px;line-height:14.6px;z-index:20;">ATA</div>
<div class="tx" style="left:161px;top:709px;font-size:14.6px;line-height:14.6px;z-index:20;">13</div>
<div class="tx" style="left:286px;top:709px;font-size:14.6px;line-height:14.6px;z-index:20;">false</div>
<div class="tx" style="left:411px;top:709px;font-size:14.6px;line-height:14.6px;z-index:20;">op2</div>
<div class="tx" style="left:536px;top:709px;font-size:14.6px;line-height:14.6px;z-index:20;">maxhr3</div>
<div class="tx" style="left:661px;top:709px;font-size:14.6px;line-height:14.6px;z-index:20;">restbp1</div>
<div class="tx" style="left:786px;top:709px;font-size:14.6px;line-height:14.6px;z-index:20;">chol3</div>
<div class="tx" style="left:911px;top:709px;font-size:14.6px;line-height:14.6px;z-index:20;">age1</div>
<div class="tx" style="left:1035px;top:709px;font-size:14.6px;line-height:14.6px;z-index:20;">F</div>
<div class="tx" style="left:1160px;top:709px;font-size:14.6px;line-height:14.6px;z-index:20;">N</div>
<div class="tx" style="left:1286px;top:709px;font-size:14.6px;line-height:14.6px;z-index:20;">false</div>
<div class="tx" style="left:1411px;top:709px;font-size:14.6px;line-height:14.6px;z-index:20;">TA</div>
<div class="tx" style="left:161px;top:747px;font-size:14.6px;line-height:14.6px;z-index:20;">14</div>
<div class="tx" style="left:286px;top:747px;font-size:14.6px;line-height:14.6px;z-index:20;">false</div>
<div class="tx" style="left:411px;top:747px;font-size:14.6px;line-height:14.6px;z-index:20;">op3</div>
<div class="tx" style="left:536px;top:747px;font-size:14.6px;line-height:14.6px;z-index:20;">maxhr3</div>
<div class="tx" style="left:661px;top:747px;font-size:14.6px;line-height:14.6px;z-index:20;">restbp1</div>
<div class="tx" style="left:786px;top:747px;font-size:14.6px;line-height:14.6px;z-index:20;">chol2</div>
<div class="tx" style="left:911px;top:747px;font-size:14.6px;line-height:14.6px;z-index:20;">age1</div>
<div class="tx" style="left:1035px;top:747px;font-size:14.6px;line-height:14.6px;z-index:20;">M</div>
<div class="tx" style="left:1160px;top:747px;font-size:14.6px;line-height:14.6px;z-index:20;">N</div>
<div class="tx" style="left:1286px;top:747px;font-size:14.6px;line-height:14.6px;z-index:20;">false</div>
<div class="tx" style="left:1411px;top:747px;font-size:14.6px;line-height:14.6px;z-index:20;">ATA</div>
<div class="tx" style="left:161px;top:784px;font-size:14.6px;line-height:14.6px;z-index:20;">15</div>
<div class="tx" style="left:286px;top:784px;font-size:14.6px;line-height:14.6px;z-index:20;">false</div>
<div class="tx" style="left:411px;top:784px;font-size:14.6px;line-height:14.6px;z-index:20;">op2</div>
<div class="tx" style="left:536px;top:784px;font-size:14.6px;line-height:14.6px;z-index:20;">maxhr7</div>
<div class="tx" style="left:661px;top:784px;font-size:14.6px;line-height:14.6px;z-index:20;">restbp1</div>
<div class="tx" style="left:786px;top:784px;font-size:14.6px;line-height:14.6px;z-index:20;">chol3</div>
<div class="tx" style="left:911px;top:784px;font-size:14.6px;line-height:14.6px;z-index:20;">age1</div>
<div class="tx" style="left:1035px;top:784px;font-size:14.6px;line-height:14.6px;z-index:20;">F</div>
<div class="tx" style="left:1160px;top:784px;font-size:14.6px;line-height:14.6px;z-index:20;">N</div>
<div class="tx" style="left:1286px;top:784px;font-size:14.6px;line-height:14.6px;z-index:20;">false</div>
<div class="tx" style="left:1411px;top:784px;font-size:14.6px;line-height:14.6px;z-index:20;">ATA</div>
</body></html>
